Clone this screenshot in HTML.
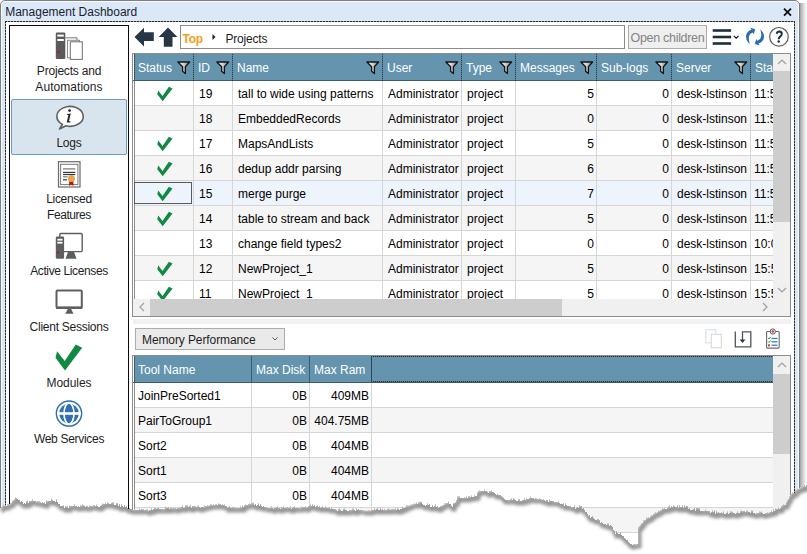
<!DOCTYPE html><html><head><meta charset="utf-8"><style>
*{box-sizing:border-box;margin:0;padding:0}
html,body{width:807px;height:554px;overflow:hidden;background:#fff}
body{position:relative;font-family:"Liberation Sans",sans-serif;font-size:12px;color:#000}
.a{position:absolute}
.t{position:absolute;white-space:nowrap;line-height:14px}
.sl{position:absolute;white-space:nowrap;font-size:12px;line-height:16px;color:#1e1e1e}
</style></head><body>
<svg width="0" height="0" style="position:absolute"><defs><linearGradient id="fg" x1="0" x2="1" y1="0" y2="0"><stop offset="0" stop-color="#f8f8f8"/><stop offset="0.45" stop-color="#d8d8d8"/><stop offset="1" stop-color="#7a7a7a"/></linearGradient></defs></svg>
<div class="a" style="left:798px;top:3px;width:9px;height:551px;background:linear-gradient(to right,#7d7d7d,#a8a8a8 25%,#d8d8d8 60%,#fff)"></div>
<div class="a" style="left:0;top:0;width:800px;height:560px;border:1px solid #7f7f7f;border-radius:5px 5px 0 0;background:#dae8f7;box-shadow:inset 0 0 0 1px #f8fbff"></div>
<div class="t" style="left:5.2px;top:5px;color:#1c1c30">Management Dashboard</div>
<svg class="a" style="left:782px;top:7px" width="11" height="10" viewBox="0 0 11 10"><path d="M2 1.6 L9 8.6 M9 1.6 L2 8.6" stroke="#111" stroke-width="1.8"/></svg>
<div class="a" style="left:5px;top:21px;width:790px;height:540px;background:#fff"></div>
<div class="a" style="left:5px;top:21px;width:790px;height:1px;background:repeating-linear-gradient(to right,#2a2a2a 0 2px,#9c9c9c 2px 3px)"></div>
<div class="a" style="left:5px;top:21px;width:1px;height:540px;background:repeating-linear-gradient(to bottom,#2a2a2a 0 2px,#9c9c9c 2px 3px)"></div>
<div class="a" style="left:794px;top:21px;width:1px;height:540px;background:repeating-linear-gradient(to bottom,#2a2a2a 0 2px,#9c9c9c 2px 3px)"></div>
<div class="a" style="left:9px;top:25px;width:120px;height:540px;border:1px solid #0a0a0a;background:#fff"></div>
<div class="a" style="left:11px;top:99px;width:116px;height:56px;background:#d8e4ee;border:1px solid #6e9cc2;border-radius:2px"></div>
<div class="sl" style="left:-31px;width:200px;text-align:center;top:63px;letter-spacing:-0.2px">Projects and</div>
<div class="sl" style="left:-31px;width:200px;text-align:center;top:79px;letter-spacing:0.05px">Automations</div>
<div class="sl" style="left:-31px;width:200px;text-align:center;top:135px;letter-spacing:-0.2px">Logs</div>
<div class="sl" style="left:-31px;width:200px;text-align:center;top:191px;letter-spacing:-0.3px">Licensed</div>
<div class="sl" style="left:-31px;width:200px;text-align:center;top:207px;letter-spacing:-0.45px">Features</div>
<div class="sl" style="left:-31px;width:200px;text-align:center;top:263px;letter-spacing:-0.38px">Active Licenses</div>
<div class="sl" style="left:-31px;width:200px;text-align:center;top:319px;letter-spacing:-0.26px">Client Sessions</div>
<div class="sl" style="left:-31px;width:200px;text-align:center;top:375px;letter-spacing:-0.05px">Modules</div>
<div class="sl" style="left:-31px;width:200px;text-align:center;top:431px;letter-spacing:-0.3px">Web Services</div>
<svg class="a" style="left:50px;top:28px" width="40" height="34" viewBox="50 28 40 34">
<rect x="55.8" y="32.6" width="9.5" height="26.4" rx="1.2" fill="#5a5a5a"/>
<rect x="57.3" y="34.6" width="6.5" height="2" fill="#fff"/>
<rect x="57.3" y="39" width="6.5" height="2" fill="#fff"/>
<rect x="57.5" y="51" width="2" height="1.6" fill="#c00"/>
<path d="M65.5 37.8 H77 V40" fill="none" stroke="#777" stroke-width="1"/>
<rect x="67.5" y="40.3" width="12" height="17.5" fill="#fff" stroke="#8a8a8a" stroke-width="1"/>
<rect x="70.3" y="41.8" width="12" height="17.6" fill="#fff" stroke="#6f6f6f" stroke-width="1"/>
</svg>
<svg class="a" style="left:50px;top:102px" width="40" height="32" viewBox="50 102 40 32">
<path d="M62.5 124.5 A13.2 9.9 0 1 1 66 125.8 L59.5 129 Z" fill="#fff" stroke="#5f6262" stroke-width="1.6" stroke-linejoin="round"/>
<circle cx="69.6" cy="110.6" r="1.4" fill="#1e2a36"/>
<path d="M67.3 114 L70.8 113.6 L68.9 121.2 L70.6 121.2 L70.2 122.4 L66.7 122.4 L68.4 115 L67 115 Z" fill="#1e2a36"/>
</svg>
<svg class="a" style="left:50px;top:156px" width="40" height="34" viewBox="50 156 40 34">
<rect x="58.5" y="161.7" width="21.5" height="25.3" fill="#fff" stroke="#6a6a6a" stroke-width="1.2"/>
<rect x="60.6" y="164.3" width="17.3" height="20.3" fill="#fff" stroke="#7a7a7a" stroke-width="1"/>
<rect x="63" y="168.3" width="12.3" height="1.2" fill="#777"/>
<rect x="63" y="171.8" width="12.3" height="1.2" fill="#2d3a48"/>
<rect x="63" y="173.9" width="12.3" height="1.2" fill="#2d3a48"/>
<rect x="63" y="176.2" width="4.5" height="1.2" fill="#777"/>
<rect x="63" y="179.2" width="4" height="1.2" fill="#2d3a48"/>
<path d="M69.2 181 L69.2 186 L71.3 184.6 L73.4 186 L73.4 181 Z" fill="#b8140c"/>
<circle cx="71.4" cy="178.5" r="3.5" fill="#e7a44a"/>
</svg>
<svg class="a" style="left:50px;top:228px" width="40" height="34" viewBox="50 228 40 34">
<rect x="59.8" y="233.5" width="22.4" height="18.1" rx="1" fill="#fff" stroke="#5e5e5e" stroke-width="1.4"/>
<path d="M68 252 L74 252 L76.5 258.7 L65.5 258.7 Z" fill="#5e5e5e"/>
<rect x="55.8" y="236.6" width="8.3" height="22.1" rx="1.2" fill="#5e5e5e"/>
<rect x="57.3" y="238.8" width="5.2" height="1.8" fill="#fff"/>
<rect x="57.3" y="241.8" width="5.2" height="1.8" fill="#fff"/>
<rect x="57" y="251.8" width="1.8" height="1.5" fill="#c00"/>
</svg>
<svg class="a" style="left:50px;top:284px" width="40" height="34" viewBox="50 284 40 34">
<rect x="56.5" y="290.5" width="25.3" height="17.3" rx="1" fill="#fff" stroke="#5e5e5e" stroke-width="2"/>
<rect x="56" y="306.5" width="26.3" height="2.4" fill="#5e5e5e"/>
<path d="M68 308.8 L71 308.8 L73.5 313.8 L65.2 313.8 Z" fill="#5e5e5e"/>
</svg>
<svg class="a" style="left:50px;top:340px" width="40" height="34" viewBox="50 340 40 34">
<path d="M57.1 351.3 L64.7 360.9 L75.8 344.6 L82.2 347.7 L65 370.4 L55.5 357.8 Z" fill="#108a43"/>
</svg>
<svg class="a" style="left:50px;top:396px" width="40" height="34" viewBox="50 396 40 34">
<circle cx="69" cy="413.5" r="12.6" fill="none" stroke="#2f6fb0" stroke-width="1.5"/>
<circle cx="69" cy="413.5" r="9.8" fill="#2f6fb0"/>
<rect x="57" y="412.2" width="24" height="2.6" fill="#fff"/>
<ellipse cx="69" cy="413.5" rx="5" ry="10.5" fill="none" stroke="#fff" stroke-width="1.6"/>
</svg>
<svg class="a" style="left:130px;top:22px" width="52" height="30" viewBox="130 22 52 30">
<path d="M134.5 37 L144 27.8 L144 32.3 L153.8 32.3 L153.8 41 L144 41 L144 46.5 Z" fill="#263646"/>
<path d="M168 27.5 L177.4 37 L172.5 37 L172.5 46.8 L163.8 46.8 L163.8 37 L158.7 37 Z" fill="#263646"/>
</svg>
<div class="a" style="left:180px;top:25px;width:445px;height:24px;border:1px solid #8c8c8c;background:#fff"></div>
<div class="t" style="left:182.5px;top:31.5px;color:#f59d16;font-weight:bold;letter-spacing:-0.2px">Top</div>
<svg class="a" style="left:211px;top:33px" width="6" height="8" viewBox="0 0 6 8"><path d="M1.5 1 L4.5 4 L1.5 7 Z" fill="#222"/></svg>
<div class="t" style="left:225.5px;top:31.5px;color:#1e1e1e;letter-spacing:-0.2px">Projects</div>
<div class="a" style="left:628px;top:25px;width:79px;height:24px;border:1px solid #adadad;background:#efefef"></div>
<div class="t" style="left:630.5px;top:31px;color:#838383;font-size:12.5px;letter-spacing:-0.3px">Open children</div>
<svg class="a" style="left:708px;top:24px" width="84" height="26" viewBox="708 24 84 26">
<rect x="712.7" y="29.2" width="18.4" height="2.6" fill="#1f2d3b"/>
<rect x="712.7" y="35.7" width="18.4" height="2.6" fill="#1f2d3b"/>
<rect x="712.7" y="42.2" width="18.4" height="2.6" fill="#1f2d3b"/>
<path d="M733.8 35.8 L736.2 38.2 L738.6 35.8" fill="none" stroke="#111" stroke-width="1.1"/>
<path d="M749.8 44 Q745.2 40 746.2 35 Q747.2 31 751.5 29.8 L750.2 27.8 L755.2 29.3 L753.7 34.3 L752.6 32.4 Q749.5 33.5 748.9 36.5 Q748.3 40 749.8 44 Z" fill="#2a6cb2"/>
<path d="M760.2 29.2 Q764.8 33.2 763.8 38.2 Q762.8 42.2 758.5 43.4 L759.8 45.4 L754.8 43.9 L756.3 38.9 L757.4 40.8 Q760.5 39.7 761.1 36.7 Q761.7 33.2 760.2 29.2 Z" fill="#2a6cb2"/>
<circle cx="778.95" cy="36.8" r="9.3" fill="#fff" stroke="#5a5a5a" stroke-width="1.2"/>
<path d="M776.6 33.8 Q777.2 31.6 779.4 31.6 Q781.9 31.8 781.8 34 Q781.7 35.5 780.1 36.6 Q778.7 37.6 778.7 39.3" fill="none" stroke="#1e2e3a" stroke-width="2"/>
<circle cx="778.7" cy="41.6" r="1.25" fill="#1e2e3a"/>
</svg>
<div class="a" style="left:132px;top:53px;width:659px;height:264px;border:1px solid #8d8d8d;background:#fff;overflow:hidden">
<div class="a" style="left:0;top:0;width:660px;height:27px;background:#6494ae"></div>
<div class="a" style="left:0;top:0;width:1px;height:264px;background:#fff"></div>
<div class="a" style="left:1px;top:0;width:1px;height:27px;background:repeating-linear-gradient(to bottom,#2c3e48 0 1px,#4a6878 1px 2px)"></div>
<div class="a" style="left:1px;top:27px;width:1px;height:245px;background:#8c8c8c"></div>
<div class="a" style="left:0;top:26px;width:660px;height:1px;background:#3e5b6c"></div>
<div class="t" style="left:5px;top:7px;color:#fff">Status</div>
<svg class="a" style="left:44px;top:7px" width="14" height="14" viewBox="0 0 14 14"><path d="M0.9 1 H12.6 L8.4 5.8 V12.6 L5.6 10.3 V5.8 Z" fill="url(#fg)" stroke="#151515" stroke-width="1.3" stroke-linejoin="round"/></svg>
<div class="t" style="left:65px;top:7px;color:#fff">ID</div>
<svg class="a" style="left:83px;top:7px" width="14" height="14" viewBox="0 0 14 14"><path d="M0.9 1 H12.6 L8.4 5.8 V12.6 L5.6 10.3 V5.8 Z" fill="url(#fg)" stroke="#151515" stroke-width="1.3" stroke-linejoin="round"/></svg>
<div class="a" style="left:60px;top:0;width:1px;height:27px;background:repeating-linear-gradient(to bottom,#2c3e48 0 1px,#557a8e 1px 2px)"></div>
<div class="t" style="left:104px;top:7px;color:#fff">Name</div>
<svg class="a" style="left:233px;top:7px" width="14" height="14" viewBox="0 0 14 14"><path d="M0.9 1 H12.6 L8.4 5.8 V12.6 L5.6 10.3 V5.8 Z" fill="url(#fg)" stroke="#151515" stroke-width="1.3" stroke-linejoin="round"/></svg>
<div class="a" style="left:99px;top:0;width:1px;height:27px;background:repeating-linear-gradient(to bottom,#2c3e48 0 1px,#557a8e 1px 2px)"></div>
<div class="t" style="left:254px;top:7px;color:#fff">User</div>
<svg class="a" style="left:312px;top:7px" width="14" height="14" viewBox="0 0 14 14"><path d="M0.9 1 H12.6 L8.4 5.8 V12.6 L5.6 10.3 V5.8 Z" fill="url(#fg)" stroke="#151515" stroke-width="1.3" stroke-linejoin="round"/></svg>
<div class="a" style="left:249px;top:0;width:1px;height:27px;background:repeating-linear-gradient(to bottom,#2c3e48 0 1px,#557a8e 1px 2px)"></div>
<div class="t" style="left:333px;top:7px;color:#fff">Type</div>
<svg class="a" style="left:366px;top:7px" width="14" height="14" viewBox="0 0 14 14"><path d="M0.9 1 H12.6 L8.4 5.8 V12.6 L5.6 10.3 V5.8 Z" fill="url(#fg)" stroke="#151515" stroke-width="1.3" stroke-linejoin="round"/></svg>
<div class="a" style="left:328px;top:0;width:1px;height:27px;background:repeating-linear-gradient(to bottom,#2c3e48 0 1px,#557a8e 1px 2px)"></div>
<div class="t" style="left:387px;top:7px;color:#fff">Messages</div>
<svg class="a" style="left:447px;top:7px" width="14" height="14" viewBox="0 0 14 14"><path d="M0.9 1 H12.6 L8.4 5.8 V12.6 L5.6 10.3 V5.8 Z" fill="url(#fg)" stroke="#151515" stroke-width="1.3" stroke-linejoin="round"/></svg>
<div class="a" style="left:382px;top:0;width:1px;height:27px;background:repeating-linear-gradient(to bottom,#2c3e48 0 1px,#557a8e 1px 2px)"></div>
<div class="t" style="left:468px;top:7px;color:#fff">Sub-logs</div>
<svg class="a" style="left:522px;top:7px" width="14" height="14" viewBox="0 0 14 14"><path d="M0.9 1 H12.6 L8.4 5.8 V12.6 L5.6 10.3 V5.8 Z" fill="url(#fg)" stroke="#151515" stroke-width="1.3" stroke-linejoin="round"/></svg>
<div class="a" style="left:463px;top:0;width:1px;height:27px;background:repeating-linear-gradient(to bottom,#2c3e48 0 1px,#557a8e 1px 2px)"></div>
<div class="t" style="left:543px;top:7px;color:#fff">Server</div>
<svg class="a" style="left:601px;top:7px" width="14" height="14" viewBox="0 0 14 14"><path d="M0.9 1 H12.6 L8.4 5.8 V12.6 L5.6 10.3 V5.8 Z" fill="url(#fg)" stroke="#151515" stroke-width="1.3" stroke-linejoin="round"/></svg>
<div class="a" style="left:538px;top:0;width:1px;height:27px;background:repeating-linear-gradient(to bottom,#2c3e48 0 1px,#557a8e 1px 2px)"></div>
<div class="t" style="left:622px;top:7px;color:#fff">Start</div>
<div class="a" style="left:617px;top:0;width:1px;height:27px;background:repeating-linear-gradient(to bottom,#2c3e48 0 1px,#557a8e 1px 2px)"></div>
<div class="a" style="left:2px;top:27px;width:660px;height:24px;background:#fff"></div>
<div class="a" style="left:2px;top:51px;width:660px;height:1px;background:#d6d6d6"></div>
<div class="a" style="left:60px;top:27px;width:1px;height:25px;background:#d6d6d6"></div>
<div class="a" style="left:99px;top:27px;width:1px;height:25px;background:#d6d6d6"></div>
<div class="a" style="left:249px;top:27px;width:1px;height:25px;background:#d6d6d6"></div>
<div class="a" style="left:328px;top:27px;width:1px;height:25px;background:#d6d6d6"></div>
<div class="a" style="left:382px;top:27px;width:1px;height:25px;background:#d6d6d6"></div>
<div class="a" style="left:463px;top:27px;width:1px;height:25px;background:#d6d6d6"></div>
<div class="a" style="left:538px;top:27px;width:1px;height:25px;background:#d6d6d6"></div>
<div class="a" style="left:617px;top:27px;width:1px;height:25px;background:#d6d6d6"></div>
<svg class="a" style="left:24px;top:32px" width="16" height="16" viewBox="55 344 28 27"><path d="M57.1 351.3 L64.7 360.9 L75.8 344.6 L82.2 347.7 L65 370.4 L55.5 357.8 Z" fill="#108a43"/></svg>
<div class="t" style="left:66px;top:33px">19</div>
<div class="t" style="left:105px;top:33px">tall to wide using patterns</div>
<div class="t" style="left:255px;top:33px">Administrator</div>
<div class="t" style="left:334px;top:33px">project</div>
<div class="t" style="left:383px;width:78px;text-align:right;top:33px">5</div>
<div class="t" style="left:464px;width:72px;text-align:right;top:33px">0</div>
<div class="t" style="left:544px;top:33px">desk-lstinson</div>
<div class="t" style="left:621px;top:33px">11:5</div>
<div class="a" style="left:2px;top:52px;width:660px;height:24px;background:#f5f5f5"></div>
<div class="a" style="left:2px;top:76px;width:660px;height:1px;background:#d6d6d6"></div>
<div class="a" style="left:60px;top:52px;width:1px;height:25px;background:#d6d6d6"></div>
<div class="a" style="left:99px;top:52px;width:1px;height:25px;background:#d6d6d6"></div>
<div class="a" style="left:249px;top:52px;width:1px;height:25px;background:#d6d6d6"></div>
<div class="a" style="left:328px;top:52px;width:1px;height:25px;background:#d6d6d6"></div>
<div class="a" style="left:382px;top:52px;width:1px;height:25px;background:#d6d6d6"></div>
<div class="a" style="left:463px;top:52px;width:1px;height:25px;background:#d6d6d6"></div>
<div class="a" style="left:538px;top:52px;width:1px;height:25px;background:#d6d6d6"></div>
<div class="a" style="left:617px;top:52px;width:1px;height:25px;background:#d6d6d6"></div>
<div class="t" style="left:66px;top:58px">18</div>
<div class="t" style="left:105px;top:58px">EmbeddedRecords</div>
<div class="t" style="left:255px;top:58px">Administrator</div>
<div class="t" style="left:334px;top:58px">project</div>
<div class="t" style="left:383px;width:78px;text-align:right;top:58px">0</div>
<div class="t" style="left:464px;width:72px;text-align:right;top:58px">0</div>
<div class="t" style="left:544px;top:58px">desk-lstinson</div>
<div class="t" style="left:621px;top:58px">11:5</div>
<div class="a" style="left:2px;top:77px;width:660px;height:24px;background:#fff"></div>
<div class="a" style="left:2px;top:101px;width:660px;height:1px;background:#d6d6d6"></div>
<div class="a" style="left:60px;top:77px;width:1px;height:25px;background:#d6d6d6"></div>
<div class="a" style="left:99px;top:77px;width:1px;height:25px;background:#d6d6d6"></div>
<div class="a" style="left:249px;top:77px;width:1px;height:25px;background:#d6d6d6"></div>
<div class="a" style="left:328px;top:77px;width:1px;height:25px;background:#d6d6d6"></div>
<div class="a" style="left:382px;top:77px;width:1px;height:25px;background:#d6d6d6"></div>
<div class="a" style="left:463px;top:77px;width:1px;height:25px;background:#d6d6d6"></div>
<div class="a" style="left:538px;top:77px;width:1px;height:25px;background:#d6d6d6"></div>
<div class="a" style="left:617px;top:77px;width:1px;height:25px;background:#d6d6d6"></div>
<svg class="a" style="left:24px;top:82px" width="16" height="16" viewBox="55 344 28 27"><path d="M57.1 351.3 L64.7 360.9 L75.8 344.6 L82.2 347.7 L65 370.4 L55.5 357.8 Z" fill="#108a43"/></svg>
<div class="t" style="left:66px;top:83px">17</div>
<div class="t" style="left:105px;top:83px">MapsAndLists</div>
<div class="t" style="left:255px;top:83px">Administrator</div>
<div class="t" style="left:334px;top:83px">project</div>
<div class="t" style="left:383px;width:78px;text-align:right;top:83px">5</div>
<div class="t" style="left:464px;width:72px;text-align:right;top:83px">0</div>
<div class="t" style="left:544px;top:83px">desk-lstinson</div>
<div class="t" style="left:621px;top:83px">11:5</div>
<div class="a" style="left:2px;top:102px;width:660px;height:24px;background:#f5f5f5"></div>
<div class="a" style="left:2px;top:126px;width:660px;height:1px;background:#d6d6d6"></div>
<div class="a" style="left:60px;top:102px;width:1px;height:25px;background:#d6d6d6"></div>
<div class="a" style="left:99px;top:102px;width:1px;height:25px;background:#d6d6d6"></div>
<div class="a" style="left:249px;top:102px;width:1px;height:25px;background:#d6d6d6"></div>
<div class="a" style="left:328px;top:102px;width:1px;height:25px;background:#d6d6d6"></div>
<div class="a" style="left:382px;top:102px;width:1px;height:25px;background:#d6d6d6"></div>
<div class="a" style="left:463px;top:102px;width:1px;height:25px;background:#d6d6d6"></div>
<div class="a" style="left:538px;top:102px;width:1px;height:25px;background:#d6d6d6"></div>
<div class="a" style="left:617px;top:102px;width:1px;height:25px;background:#d6d6d6"></div>
<svg class="a" style="left:24px;top:107px" width="16" height="16" viewBox="55 344 28 27"><path d="M57.1 351.3 L64.7 360.9 L75.8 344.6 L82.2 347.7 L65 370.4 L55.5 357.8 Z" fill="#108a43"/></svg>
<div class="t" style="left:66px;top:108px">16</div>
<div class="t" style="left:105px;top:108px">dedup addr parsing</div>
<div class="t" style="left:255px;top:108px">Administrator</div>
<div class="t" style="left:334px;top:108px">project</div>
<div class="t" style="left:383px;width:78px;text-align:right;top:108px">6</div>
<div class="t" style="left:464px;width:72px;text-align:right;top:108px">0</div>
<div class="t" style="left:544px;top:108px">desk-lstinson</div>
<div class="t" style="left:621px;top:108px">11:5</div>
<div class="a" style="left:2px;top:127px;width:660px;height:24px;background:#eef4fb"></div>
<div class="a" style="left:2px;top:151px;width:660px;height:1px;background:#d6d6d6"></div>
<div class="a" style="left:60px;top:127px;width:1px;height:25px;background:#d6d6d6"></div>
<div class="a" style="left:99px;top:127px;width:1px;height:25px;background:#d6d6d6"></div>
<div class="a" style="left:249px;top:127px;width:1px;height:25px;background:#d6d6d6"></div>
<div class="a" style="left:328px;top:127px;width:1px;height:25px;background:#d6d6d6"></div>
<div class="a" style="left:382px;top:127px;width:1px;height:25px;background:#d6d6d6"></div>
<div class="a" style="left:463px;top:127px;width:1px;height:25px;background:#d6d6d6"></div>
<div class="a" style="left:538px;top:127px;width:1px;height:25px;background:#d6d6d6"></div>
<div class="a" style="left:617px;top:127px;width:1px;height:25px;background:#d6d6d6"></div>
<div class="a" style="left:1px;top:128px;width:58px;height:22px;border:1px solid #5a5a5a"></div>
<svg class="a" style="left:24px;top:132px" width="16" height="16" viewBox="55 344 28 27"><path d="M57.1 351.3 L64.7 360.9 L75.8 344.6 L82.2 347.7 L65 370.4 L55.5 357.8 Z" fill="#108a43"/></svg>
<div class="t" style="left:66px;top:133px">15</div>
<div class="t" style="left:105px;top:133px">merge purge</div>
<div class="t" style="left:255px;top:133px">Administrator</div>
<div class="t" style="left:334px;top:133px">project</div>
<div class="t" style="left:383px;width:78px;text-align:right;top:133px">7</div>
<div class="t" style="left:464px;width:72px;text-align:right;top:133px">0</div>
<div class="t" style="left:544px;top:133px">desk-lstinson</div>
<div class="t" style="left:621px;top:133px">11:5</div>
<div class="a" style="left:2px;top:152px;width:660px;height:24px;background:#f5f5f5"></div>
<div class="a" style="left:2px;top:176px;width:660px;height:1px;background:#d6d6d6"></div>
<div class="a" style="left:60px;top:152px;width:1px;height:25px;background:#d6d6d6"></div>
<div class="a" style="left:99px;top:152px;width:1px;height:25px;background:#d6d6d6"></div>
<div class="a" style="left:249px;top:152px;width:1px;height:25px;background:#d6d6d6"></div>
<div class="a" style="left:328px;top:152px;width:1px;height:25px;background:#d6d6d6"></div>
<div class="a" style="left:382px;top:152px;width:1px;height:25px;background:#d6d6d6"></div>
<div class="a" style="left:463px;top:152px;width:1px;height:25px;background:#d6d6d6"></div>
<div class="a" style="left:538px;top:152px;width:1px;height:25px;background:#d6d6d6"></div>
<div class="a" style="left:617px;top:152px;width:1px;height:25px;background:#d6d6d6"></div>
<svg class="a" style="left:24px;top:157px" width="16" height="16" viewBox="55 344 28 27"><path d="M57.1 351.3 L64.7 360.9 L75.8 344.6 L82.2 347.7 L65 370.4 L55.5 357.8 Z" fill="#108a43"/></svg>
<div class="t" style="left:66px;top:158px">14</div>
<div class="t" style="left:105px;top:158px">table to stream and back</div>
<div class="t" style="left:255px;top:158px">Administrator</div>
<div class="t" style="left:334px;top:158px">project</div>
<div class="t" style="left:383px;width:78px;text-align:right;top:158px">5</div>
<div class="t" style="left:464px;width:72px;text-align:right;top:158px">0</div>
<div class="t" style="left:544px;top:158px">desk-lstinson</div>
<div class="t" style="left:621px;top:158px">11:5</div>
<div class="a" style="left:2px;top:177px;width:660px;height:24px;background:#fff"></div>
<div class="a" style="left:2px;top:201px;width:660px;height:1px;background:#d6d6d6"></div>
<div class="a" style="left:60px;top:177px;width:1px;height:25px;background:#d6d6d6"></div>
<div class="a" style="left:99px;top:177px;width:1px;height:25px;background:#d6d6d6"></div>
<div class="a" style="left:249px;top:177px;width:1px;height:25px;background:#d6d6d6"></div>
<div class="a" style="left:328px;top:177px;width:1px;height:25px;background:#d6d6d6"></div>
<div class="a" style="left:382px;top:177px;width:1px;height:25px;background:#d6d6d6"></div>
<div class="a" style="left:463px;top:177px;width:1px;height:25px;background:#d6d6d6"></div>
<div class="a" style="left:538px;top:177px;width:1px;height:25px;background:#d6d6d6"></div>
<div class="a" style="left:617px;top:177px;width:1px;height:25px;background:#d6d6d6"></div>
<div class="t" style="left:66px;top:183px">13</div>
<div class="t" style="left:105px;top:183px">change field types2</div>
<div class="t" style="left:255px;top:183px">Administrator</div>
<div class="t" style="left:334px;top:183px">project</div>
<div class="t" style="left:383px;width:78px;text-align:right;top:183px">0</div>
<div class="t" style="left:464px;width:72px;text-align:right;top:183px">0</div>
<div class="t" style="left:544px;top:183px">desk-lstinson</div>
<div class="t" style="left:621px;top:183px">10:0</div>
<div class="a" style="left:2px;top:202px;width:660px;height:24px;background:#f5f5f5"></div>
<div class="a" style="left:2px;top:226px;width:660px;height:1px;background:#d6d6d6"></div>
<div class="a" style="left:60px;top:202px;width:1px;height:25px;background:#d6d6d6"></div>
<div class="a" style="left:99px;top:202px;width:1px;height:25px;background:#d6d6d6"></div>
<div class="a" style="left:249px;top:202px;width:1px;height:25px;background:#d6d6d6"></div>
<div class="a" style="left:328px;top:202px;width:1px;height:25px;background:#d6d6d6"></div>
<div class="a" style="left:382px;top:202px;width:1px;height:25px;background:#d6d6d6"></div>
<div class="a" style="left:463px;top:202px;width:1px;height:25px;background:#d6d6d6"></div>
<div class="a" style="left:538px;top:202px;width:1px;height:25px;background:#d6d6d6"></div>
<div class="a" style="left:617px;top:202px;width:1px;height:25px;background:#d6d6d6"></div>
<svg class="a" style="left:24px;top:207px" width="16" height="16" viewBox="55 344 28 27"><path d="M57.1 351.3 L64.7 360.9 L75.8 344.6 L82.2 347.7 L65 370.4 L55.5 357.8 Z" fill="#108a43"/></svg>
<div class="t" style="left:66px;top:208px">12</div>
<div class="t" style="left:105px;top:208px">NewProject_1</div>
<div class="t" style="left:255px;top:208px">Administrator</div>
<div class="t" style="left:334px;top:208px">project</div>
<div class="t" style="left:383px;width:78px;text-align:right;top:208px">5</div>
<div class="t" style="left:464px;width:72px;text-align:right;top:208px">0</div>
<div class="t" style="left:544px;top:208px">desk-lstinson</div>
<div class="t" style="left:621px;top:208px">15:5</div>
<div class="a" style="left:2px;top:227px;width:660px;height:24px;background:#fff"></div>
<div class="a" style="left:2px;top:251px;width:660px;height:1px;background:#d6d6d6"></div>
<div class="a" style="left:60px;top:227px;width:1px;height:25px;background:#d6d6d6"></div>
<div class="a" style="left:99px;top:227px;width:1px;height:25px;background:#d6d6d6"></div>
<div class="a" style="left:249px;top:227px;width:1px;height:25px;background:#d6d6d6"></div>
<div class="a" style="left:328px;top:227px;width:1px;height:25px;background:#d6d6d6"></div>
<div class="a" style="left:382px;top:227px;width:1px;height:25px;background:#d6d6d6"></div>
<div class="a" style="left:463px;top:227px;width:1px;height:25px;background:#d6d6d6"></div>
<div class="a" style="left:538px;top:227px;width:1px;height:25px;background:#d6d6d6"></div>
<div class="a" style="left:617px;top:227px;width:1px;height:25px;background:#d6d6d6"></div>
<svg class="a" style="left:24px;top:232px" width="16" height="16" viewBox="55 344 28 27"><path d="M57.1 351.3 L64.7 360.9 L75.8 344.6 L82.2 347.7 L65 370.4 L55.5 357.8 Z" fill="#108a43"/></svg>
<div class="t" style="left:66px;top:233px">11</div>
<div class="t" style="left:105px;top:233px">NewProject_1</div>
<div class="t" style="left:255px;top:233px">Administrator</div>
<div class="t" style="left:334px;top:233px">project</div>
<div class="t" style="left:383px;width:78px;text-align:right;top:233px">5</div>
<div class="t" style="left:464px;width:72px;text-align:right;top:233px">0</div>
<div class="t" style="left:544px;top:233px">desk-lstinson</div>
<div class="t" style="left:621px;top:233px">15:5</div>
<div class="a" style="left:640px;top:0;width:17px;height:246px;background:#f0f0f0"></div>
<div class="a" style="left:640px;top:17px;width:17px;height:151px;background:#cdcdcd"></div>
<svg class="a" style="left:644px;top:4px" width="10" height="8" viewBox="0 0 10 8"><path d="M1 6 L5 2 L9 6" fill="none" stroke="#a0a0a0" stroke-width="1.2"/></svg>
<svg class="a" style="left:644px;top:232px" width="10" height="8" viewBox="0 0 10 8"><path d="M1 2 L5 6 L9 2" fill="none" stroke="#a0a0a0" stroke-width="1.2"/></svg>
<div class="a" style="left:0;top:245px;width:660px;height:17px;background:#f0f0f0"></div>
<div class="a" style="left:17px;top:245px;width:412px;height:17px;background:#cdcdcd"></div>
<svg class="a" style="left:5px;top:248px" width="8" height="10" viewBox="0 0 8 10"><path d="M6 1 L2 5 L6 9" fill="none" stroke="#a0a0a0" stroke-width="1.2"/></svg>
<svg class="a" style="left:628px;top:248px" width="8" height="10" viewBox="0 0 8 10"><path d="M2 1 L6 5 L2 9" fill="none" stroke="#a0a0a0" stroke-width="1.2"/></svg>
</div>
<div class="a" style="left:133px;top:319px;width:658px;height:5px;background:#f1f1f1"></div>
<div class="a" style="left:135px;top:328px;width:150px;height:22px;border:1px solid #acacac;background:#eaeaea"></div>
<div class="t" style="left:142px;top:333px;color:#1e1e1e;letter-spacing:-0.1px">Memory Performance</div>
<svg class="a" style="left:271px;top:336px" width="8" height="6" viewBox="0 0 8 6"><path d="M1.5 1.5 L4 4 L6.5 1.5" fill="none" stroke="#555" stroke-width="1"/></svg>
<svg class="a" style="left:700px;top:325px" width="90" height="28" viewBox="700 325 90 28">
<rect x="705.8" y="329.8" width="10" height="13" fill="#fff" stroke="#d2dde8" stroke-width="1"/>
<rect x="711.3" y="334.3" width="10" height="13.5" fill="#fff" stroke="#d5d5d5" stroke-width="1"/>
<path d="M735.3 331.5 L735.3 346.8 L750.8 346.8 L750.8 331.8 L742.5 331.8 L742.5 340" fill="none" stroke="#4c5660" stroke-width="1.3"/>
<path d="M739.6 339.5 L745.4 339.5 L742.5 343 Z" fill="#2a3440"/>
<rect x="766.6" y="331.5" width="12.6" height="16.6" rx="1" fill="#fff" stroke="#606a74" stroke-width="1.1"/>
<circle cx="772.8" cy="331.5" r="2.6" fill="#fff" stroke="#555" stroke-width="1"/>
<circle cx="772.8" cy="331.5" r="1.3" fill="#d33"/>
<path d="M768 338 l1 1 l1.5-2" fill="none" stroke="#2a2" stroke-width="1"/>
<path d="M768 341.5 l1 1 l1.5-2" fill="none" stroke="#2a2" stroke-width="1"/>
<rect x="768" y="344.3" width="2" height="2" fill="#d33"/>
<rect x="771.5" y="337.8" width="6" height="1.3" fill="#3d7bc0"/>
<rect x="771.5" y="341.2" width="6" height="1.3" fill="#3d7bc0"/>
<rect x="771.5" y="344.6" width="6" height="1.3" fill="#3d7bc0"/>
</svg>
<div class="a" style="left:132px;top:355px;width:659px;height:230px;border:1px solid #8d8d8d;background:#fff;overflow:hidden">
<div class="a" style="left:0;top:0;width:640px;height:27px;background:#6494ae"></div>
<div class="a" style="left:0;top:0;width:1px;height:300px;background:#fff"></div>
<div class="a" style="left:1px;top:0;width:1px;height:27px;background:#3e5b6c"></div>
<div class="a" style="left:1px;top:27px;width:1px;height:300px;background:#8c8c8c"></div>
<div class="a" style="left:0;top:26px;width:640px;height:1px;background:#3e5b6c"></div>
<div class="a" style="left:238px;top:0;width:402px;height:1px;background:repeating-linear-gradient(to right,#2a2f33 0 1px,#6a7a84 1px 2px)"></div>
<div class="a" style="left:238px;top:25px;width:402px;height:1px;background:repeating-linear-gradient(to right,#2a2f33 0 1px,#6a7a84 1px 2px)"></div>
<div class="a" style="left:238px;top:0;width:1px;height:26px;background:#2e4654"></div>
<div class="a" style="left:118px;top:0;width:1px;height:27px;background:#3e5b6c"></div>
<div class="a" style="left:176px;top:0;width:1px;height:27px;background:#3e5b6c"></div>
<div class="t" style="left:5px;top:7px;color:#fff">Tool Name</div>
<div class="t" style="left:123px;top:7px;color:#fff">Max Disk</div>
<div class="t" style="left:181px;top:7px;color:#fff">Max Ram</div>
<div class="a" style="left:2px;top:27px;width:640px;height:24px;background:#fff"></div>
<div class="a" style="left:2px;top:51px;width:640px;height:1px;background:#d6d6d6"></div>
<div class="a" style="left:118px;top:27px;width:1px;height:25px;background:#d6d6d6"></div>
<div class="a" style="left:176px;top:27px;width:1px;height:25px;background:#d6d6d6"></div>
<div class="a" style="left:238px;top:27px;width:1px;height:25px;background:#d6d6d6"></div>
<div class="t" style="left:5px;top:33px">JoinPreSorted1</div>
<div class="t" style="left:118px;width:56px;text-align:right;top:33px">0B</div>
<div class="t" style="left:176px;width:60px;text-align:right;top:33px">409MB</div>
<div class="a" style="left:2px;top:52px;width:640px;height:24px;background:#f5f5f5"></div>
<div class="a" style="left:2px;top:76px;width:640px;height:1px;background:#d6d6d6"></div>
<div class="a" style="left:118px;top:52px;width:1px;height:25px;background:#d6d6d6"></div>
<div class="a" style="left:176px;top:52px;width:1px;height:25px;background:#d6d6d6"></div>
<div class="a" style="left:238px;top:52px;width:1px;height:25px;background:#d6d6d6"></div>
<div class="t" style="left:5px;top:58px">PairToGroup1</div>
<div class="t" style="left:118px;width:56px;text-align:right;top:58px">0B</div>
<div class="t" style="left:176px;width:60px;text-align:right;top:58px">404.75MB</div>
<div class="a" style="left:2px;top:77px;width:640px;height:24px;background:#fff"></div>
<div class="a" style="left:2px;top:101px;width:640px;height:1px;background:#d6d6d6"></div>
<div class="a" style="left:118px;top:77px;width:1px;height:25px;background:#d6d6d6"></div>
<div class="a" style="left:176px;top:77px;width:1px;height:25px;background:#d6d6d6"></div>
<div class="a" style="left:238px;top:77px;width:1px;height:25px;background:#d6d6d6"></div>
<div class="t" style="left:5px;top:83px">Sort2</div>
<div class="t" style="left:118px;width:56px;text-align:right;top:83px">0B</div>
<div class="t" style="left:176px;width:60px;text-align:right;top:83px">404MB</div>
<div class="a" style="left:2px;top:102px;width:640px;height:24px;background:#f5f5f5"></div>
<div class="a" style="left:2px;top:126px;width:640px;height:1px;background:#d6d6d6"></div>
<div class="a" style="left:118px;top:102px;width:1px;height:25px;background:#d6d6d6"></div>
<div class="a" style="left:176px;top:102px;width:1px;height:25px;background:#d6d6d6"></div>
<div class="a" style="left:238px;top:102px;width:1px;height:25px;background:#d6d6d6"></div>
<div class="t" style="left:5px;top:108px">Sort1</div>
<div class="t" style="left:118px;width:56px;text-align:right;top:108px">0B</div>
<div class="t" style="left:176px;width:60px;text-align:right;top:108px">404MB</div>
<div class="a" style="left:2px;top:127px;width:640px;height:24px;background:#fff"></div>
<div class="a" style="left:2px;top:151px;width:640px;height:1px;background:#d6d6d6"></div>
<div class="a" style="left:118px;top:127px;width:1px;height:25px;background:#d6d6d6"></div>
<div class="a" style="left:176px;top:127px;width:1px;height:25px;background:#d6d6d6"></div>
<div class="a" style="left:238px;top:127px;width:1px;height:25px;background:#d6d6d6"></div>
<div class="t" style="left:5px;top:133px">Sort3</div>
<div class="t" style="left:118px;width:56px;text-align:right;top:133px">0B</div>
<div class="t" style="left:176px;width:60px;text-align:right;top:133px">404MB</div>
<div class="a" style="left:2px;top:152px;width:640px;height:24px;background:#f5f5f5"></div>
<div class="a" style="left:2px;top:176px;width:640px;height:1px;background:#d6d6d6"></div>
<div class="a" style="left:118px;top:152px;width:1px;height:25px;background:#d6d6d6"></div>
<div class="a" style="left:176px;top:152px;width:1px;height:25px;background:#d6d6d6"></div>
<div class="a" style="left:238px;top:152px;width:1px;height:25px;background:#d6d6d6"></div>
<div class="t" style="left:5px;top:158px">Sort4</div>
<div class="t" style="left:118px;width:56px;text-align:right;top:158px">0B</div>
<div class="t" style="left:176px;width:60px;text-align:right;top:158px">404MB</div>
<div class="a" style="left:640px;top:0;width:17px;height:300px;background:#f0f0f0"></div>
<div class="a" style="left:640px;top:18px;width:17px;height:80px;background:#cdcdcd"></div>
<svg class="a" style="left:644px;top:5px" width="10" height="8" viewBox="0 0 10 8"><path d="M1 6 L5 2 L9 6" fill="none" stroke="#a0a0a0" stroke-width="1.2"/></svg>
</div>
<svg class="a" style="left:0;top:0" width="807" height="554" viewBox="0 0 807 554">
<defs><filter id="bl" x="-5%" y="-50%" width="110%" height="200%"><feGaussianBlur stdDeviation="1.6"/></filter>
<clipPath id="below"><polygon points="0,508 1,508 1,507 2,507 2,506 3,506 3,504 4,504 4,506 5,506 5,505 6,505 6,506 7,506 7,504 8,504 8,504 9,504 9,504 10,504 10,503 11,503 11,503 12,503 12,501 13,501 13,500 14,500 14,499 15,499 15,497 16,497 16,498 17,498 17,499 18,499 18,500 19,500 19,500 20,500 20,502 21,502 21,501 22,501 22,502 23,502 23,504 24,504 24,503 25,503 25,504 26,504 26,501 27,501 27,500 28,500 28,503 29,503 29,501 30,501 30,501 31,501 31,501 32,501 32,499 33,499 33,501 34,501 34,501 35,501 35,501 36,501 36,502 37,502 37,501 38,501 38,501 39,501 39,501 40,501 40,502 41,502 41,503 42,503 42,502 43,502 43,503 44,503 44,502 45,502 45,504 46,504 46,500 47,500 47,501 48,501 48,501 49,501 49,501 50,501 50,501 51,501 51,498 52,498 52,500 53,500 53,501 54,501 54,501 55,501 55,502 56,502 56,499 57,499 57,502 58,502 58,504 59,504 59,504 60,504 60,506 61,506 61,506 62,506 62,506 63,506 63,505 64,505 64,508 65,508 65,506 66,506 66,507 67,507 67,506 68,506 68,508 69,508 69,505 70,505 70,506 71,506 71,506 72,506 72,506 73,506 73,506 74,506 74,504 75,504 75,506 76,506 76,506 77,506 77,507 78,507 78,506 79,506 79,507 80,507 80,505 81,505 81,506 82,506 82,504 83,504 83,505 84,505 84,506 85,506 85,507 86,507 86,506 87,506 87,506 88,506 88,507 89,507 89,505 90,505 90,506 91,506 91,506 92,506 92,506 93,506 93,505 94,505 94,505 95,505 95,506 96,506 96,504 97,504 97,506 98,506 98,507 99,507 99,507 100,507 100,506 101,506 101,505 102,505 102,503 103,503 103,504 104,504 104,504 105,504 105,502 106,502 106,504 107,504 107,502 108,502 108,503 109,503 109,504 110,504 110,504 111,504 111,503 112,503 112,502 113,502 113,502 114,502 114,505 115,505 115,505 116,505 116,503 117,503 117,503 118,503 118,506 119,506 119,504 120,504 120,507 121,507 121,504 122,504 122,506 123,506 123,507 124,507 124,505 125,505 125,507 126,507 126,506 127,506 127,508 128,508 128,509 129,509 129,508 130,508 130,509 131,509 131,509 132,509 132,510 133,510 133,510 134,510 134,509 135,509 135,510 136,510 136,510 137,510 137,510 138,510 138,510 139,510 139,508 140,508 140,510 141,510 141,509 142,509 142,509 143,509 143,509 144,509 144,510 145,510 145,510 146,510 146,509 147,509 147,509 148,509 148,511 149,511 149,510 150,510 150,510 151,510 151,508 152,508 152,510 153,510 153,509 154,509 154,507 155,507 155,508 156,508 156,509 157,509 157,507 158,507 158,508 159,508 159,509 160,509 160,509 161,509 161,509 162,509 162,509 163,509 163,509 164,509 164,509 165,509 165,506 166,506 166,508 167,508 167,508 168,508 168,507 169,507 169,509 170,509 170,508 171,508 171,508 172,508 172,508 173,508 173,508 174,508 174,508 175,508 175,507 176,507 176,509 177,509 177,507 178,507 178,508 179,508 179,508 180,508 180,507 181,507 181,507 182,507 182,505 183,505 183,508 184,508 184,508 185,508 185,505 186,505 186,505 187,505 187,505 188,505 188,507 189,507 189,506 190,506 190,505 191,505 191,508 192,508 192,506 193,506 193,506 194,506 194,506 195,506 195,506 196,506 196,507 197,507 197,506 198,506 198,505 199,505 199,507 200,507 200,508 201,508 201,507 202,507 202,507 203,507 203,507 204,507 204,505 205,505 205,506 206,506 206,506 207,506 207,505 208,505 208,506 209,506 209,505 210,505 210,504 211,504 211,504 212,504 212,505 213,505 213,504 214,504 214,505 215,505 215,504 216,504 216,504 217,504 217,505 218,505 218,503 219,503 219,504 220,504 220,504 221,504 221,505 222,505 222,504 223,504 223,505 224,505 224,504 225,504 225,506 226,506 226,506 227,506 227,508 228,508 228,507 229,507 229,506 230,506 230,508 231,508 231,508 232,508 232,507 233,507 233,507 234,507 234,507 235,507 235,507 236,507 236,508 237,508 237,508 238,508 238,508 239,508 239,508 240,508 240,506 241,506 241,508 242,508 242,505 243,505 243,507 244,507 244,505 245,505 245,504 246,504 246,505 247,505 247,505 248,505 248,504 249,504 249,503 250,503 250,504 251,504 251,503 252,503 252,503 253,503 253,502 254,502 254,505 255,505 255,504 256,504 256,506 257,506 257,505 258,505 258,503 259,503 259,506 260,506 260,504 261,504 261,506 262,506 262,507 263,507 263,506 264,506 264,507 265,507 265,507 266,507 266,507 267,507 267,508 268,508 268,508 269,508 269,508 270,508 270,508 271,508 271,506 272,506 272,508 273,508 273,509 274,509 274,508 275,508 275,508 276,508 276,507 277,507 277,506 278,506 278,508 279,508 279,508 280,508 280,509 281,509 281,507 282,507 282,508 283,508 283,506 284,506 284,508 285,508 285,508 286,508 286,508 287,508 287,507 288,507 288,508 289,508 289,508 290,508 290,506 291,506 291,509 292,509 292,508 293,508 293,507 294,507 294,506 295,506 295,508 296,508 296,508 297,508 297,508 298,508 298,508 299,508 299,508 300,508 300,508 301,508 301,506 302,506 302,507 303,507 303,507 304,507 304,507 305,507 305,506 306,506 306,508 307,508 307,507 308,507 308,506 309,506 309,505 310,505 310,504 311,504 311,506 312,506 312,504 313,504 313,506 314,506 314,505 315,505 315,507 316,507 316,506 317,506 317,505 318,505 318,507 319,507 319,506 320,506 320,508 321,508 321,507 322,507 322,506 323,506 323,508 324,508 324,508 325,508 325,506 326,506 326,508 327,508 327,508 328,508 328,508 329,508 329,507 330,507 330,509 331,509 331,507 332,507 332,509 333,509 333,509 334,509 334,509 335,509 335,509 336,509 336,510 337,510 337,511 338,511 338,509 339,509 339,508 340,508 340,510 341,510 341,511 342,511 342,511 343,511 343,509 344,509 344,508 345,508 345,510 346,510 346,510 347,510 347,511 348,511 348,511 349,511 349,510 350,510 350,510 351,510 351,510 352,510 352,508 353,508 353,508 354,508 354,510 355,510 355,511 356,511 356,508 357,508 357,510 358,510 358,509 359,509 359,510 360,510 360,510 361,510 361,510 362,510 362,510 363,510 363,510 364,510 364,510 365,510 365,511 366,511 366,510 367,510 367,511 368,511 368,510 369,510 369,510 370,510 370,511 371,511 371,509 372,509 372,510 373,510 373,510 374,510 374,508 375,508 375,510 376,510 376,509 377,509 377,507 378,507 378,510 379,510 379,510 380,510 380,508 381,508 381,510 382,510 382,509 383,509 383,510 384,510 384,509 385,509 385,510 386,510 386,510 387,510 387,509 388,509 388,508 389,508 389,509 390,509 390,510 391,510 391,509 392,509 392,509 393,509 393,509 394,509 394,509 395,509 395,508 396,508 396,510 397,510 397,507 398,507 398,509 399,509 399,510 400,510 400,509 401,509 401,509 402,509 402,506 403,506 403,508 404,508 404,508 405,508 405,507 406,507 406,505 407,505 407,505 408,505 408,506 409,506 409,505 410,505 410,505 411,505 411,504 412,504 412,504 413,504 413,504 414,504 414,503 415,503 415,504 416,504 416,502 417,502 417,504 418,504 418,502 419,502 419,502 420,502 420,501 421,501 421,502 422,502 422,504 423,504 423,505 424,505 424,505 425,505 425,506 426,506 426,505 427,505 427,503 428,503 428,505 429,505 429,504 430,504 430,507 431,507 431,507 432,507 432,505 433,505 433,507 434,507 434,506 435,506 435,504 436,504 436,507 437,507 437,506 438,506 438,508 439,508 439,507 440,507 440,506 441,506 441,506 442,506 442,505 443,505 443,505 444,505 444,503 445,503 445,503 446,503 446,503 447,503 447,503 448,503 448,501 449,501 449,504 450,504 450,504 451,504 451,506 452,506 452,507 453,507 453,503 454,503 454,503 455,503 455,502 456,502 456,500 457,500 457,496 458,496 458,496 459,496 459,496 460,496 460,498 461,498 461,498 462,498 462,498 463,498 463,498 464,498 464,497 465,497 465,498 466,498 466,496 467,496 467,498 468,498 468,496 469,496 469,496 470,496 470,497 471,497 471,495 472,495 472,497 473,497 473,497 474,497 474,495 475,495 475,496 476,496 476,496 477,496 477,492 478,492 478,491 479,491 479,490 480,490 480,491 481,491 481,491 482,491 482,491 483,491 483,491 484,491 484,489 485,489 485,491 486,491 486,491 487,491 487,492 488,492 488,493 489,493 489,491 490,491 490,491 491,491 491,490 492,490 492,492 493,492 493,492 494,492 494,493 495,493 495,494 496,494 496,495 497,495 497,494 498,494 498,495 499,495 499,495 500,495 500,495 501,495 501,496 502,496 502,497 503,497 503,498 504,498 504,499 505,499 505,500 506,500 506,500 507,500 507,500 508,500 508,500 509,500 509,500 510,500 510,499 511,499 511,498 512,498 512,500 513,500 513,498 514,498 514,499 515,499 515,500 516,500 516,501 517,501 517,501 518,501 518,499 519,499 519,499 520,499 520,501 521,501 521,501 522,501 522,500 523,500 523,500 524,500 524,498 525,498 525,500 526,500 526,498 527,498 527,499 528,499 528,499 529,499 529,498 530,498 530,496 531,496 531,498 532,498 532,498 533,498 533,498 534,498 534,499 535,499 535,498 536,498 536,498 537,498 537,499 538,499 538,499 539,499 539,498 540,498 540,499 541,499 541,499 542,499 542,500 543,500 543,499 544,499 544,500 545,500 545,501 546,501 546,500 547,500 547,500 548,500 548,502 549,502 549,499 550,499 550,501 551,501 551,501 552,501 552,501 553,501 553,501 554,501 554,502 555,502 555,502 556,502 556,502 557,502 557,502 558,502 558,501 559,501 559,503 560,503 560,504 561,504 561,504 562,504 562,504 563,504 563,503 564,503 564,506 565,506 565,503 566,503 566,505 567,505 567,506 568,506 568,506 569,506 569,506 570,506 570,506 571,506 571,507 572,507 572,507 573,507 573,507 574,507 574,505 575,505 575,509 576,509 576,508 577,508 577,507 578,507 578,508 579,508 579,505 580,505 580,506 581,506 581,506 582,506 582,509 583,509 583,508 584,508 584,510 585,510 585,512 586,512 586,512 587,512 587,514 588,514 588,516 589,516 589,515 590,515 590,518 591,518 591,517 592,517 592,516 593,516 593,518 594,518 594,519 595,519 595,520 596,520 596,520 597,520 597,519 598,519 598,519 599,519 599,520 600,520 600,523 601,523 601,522 602,522 602,523 603,523 603,524 604,524 604,524 605,524 605,524 606,524 606,525 607,525 607,523 608,523 608,523 609,523 609,526 610,526 610,525 611,525 611,526 612,526 612,527 613,527 613,527 613,527 613,530 614,530 614,531 615,531 615,534 616,534 616,531 617,531 617,533 618,533 618,534 619,534 619,534 620,534 620,532 621,532 621,535 622,535 622,536 623,536 623,536 624,536 624,538 625,538 625,539 626,539 626,540 627,540 627,540 628,540 628,542 629,542 629,543 630,543 630,544 631,544 631,544 632,544 632,545 633,545 633,544 634,544 634,544 635,544 635,544 636,544 636,544 637,544 637,544 638,544 638,544 638,544 638,527 639,527 639,526 640,526 640,525 641,525 641,523 642,523 642,523 643,523 643,520 644,520 644,520 645,520 645,520 646,520 646,517 647,517 647,518 648,518 648,517 649,517 649,518 650,518 650,516 651,516 651,515 652,515 652,515 653,515 653,514 654,514 654,513 655,513 655,512 656,512 656,513 657,513 657,512 658,512 658,510 659,510 659,511 660,511 660,510 661,510 661,510 662,510 662,507 663,507 663,509 664,509 664,508 665,508 665,509 666,509 666,509 667,509 667,508 668,508 668,506 669,506 669,505 670,505 670,508 671,508 671,506 672,506 672,507 673,507 673,505 674,505 674,506 675,506 675,507 676,507 676,507 677,507 677,505 678,505 678,508 679,508 679,505 680,505 680,507 681,507 681,507 682,507 682,505 683,505 683,508 684,508 684,505 685,505 685,507 686,507 686,506 687,506 687,506 688,506 688,509 689,509 689,508 690,508 690,510 691,510 691,510 692,510 692,510 693,510 693,509 694,509 694,507 695,507 695,511 696,511 696,508 697,508 697,508 698,508 698,508 699,508 699,508 700,508 700,511 701,511 701,511 702,511 702,511 703,511 703,511 704,511 704,511 705,511 705,509 706,509 706,511 707,511 707,511 708,511 708,511 709,511 709,511 710,511 710,513 711,513 711,512 712,512 712,510 713,510 713,512 714,512 714,510 715,510 715,514 716,514 716,511 717,511 717,513 718,513 718,512 719,512 719,513 720,513 720,513 721,513 721,512 722,512 722,513 723,513 723,511 724,511 724,514 725,514 725,514 726,514 726,513 727,513 727,511 728,511 728,514 729,514 729,513 730,513 730,511 731,511 731,511 732,511 732,512 733,512 733,513 734,513 734,513 735,513 735,514 736,514 736,513 737,513 737,511 738,511 738,513 739,513 739,513 740,513 740,511 741,511 741,510 742,510 742,511 743,511 743,511 744,511 744,511 745,511 745,512 746,512 746,511 747,511 747,510 748,510 748,512 749,512 749,512 750,512 750,513 751,513 751,510 752,510 752,510 753,510 753,513 754,513 754,513 755,513 755,514 756,514 756,513 757,513 757,513 758,513 758,513 759,513 759,511 760,511 760,512 761,512 761,511 762,511 762,513 763,513 763,514 764,514 764,514 765,514 765,513 766,513 766,513 767,513 767,512 768,512 768,513 769,513 769,512 770,512 770,512 771,512 771,510 772,510 772,512 773,512 773,509 774,509 774,511 775,511 775,508 776,508 776,509 777,509 777,509 778,509 778,507 779,507 779,509 780,509 780,508 781,508 781,506 782,506 782,505 783,505 783,504 784,504 784,505 785,505 785,505 786,505 786,502 787,502 787,500 788,500 788,499 789,499 789,496 790,496 790,495 791,495 791,494 792,494 792,492 793,492 793,493 794,493 794,493 795,493 795,490 796,490 796,490 797,490 797,488 798,488 798,489 799,489 799,488 800,488 800,487 801,487 801,488 802,488 802,487 803,487 803,486 804,486 804,484 805,484 805,487 806,487 806,485 807,485 807,485 807,554 0,554"/></clipPath></defs>
<polygon points="0,508 1,508 1,507 2,507 2,506 3,506 3,504 4,504 4,506 5,506 5,505 6,505 6,506 7,506 7,504 8,504 8,504 9,504 9,504 10,504 10,503 11,503 11,503 12,503 12,501 13,501 13,500 14,500 14,499 15,499 15,497 16,497 16,498 17,498 17,499 18,499 18,500 19,500 19,500 20,500 20,502 21,502 21,501 22,501 22,502 23,502 23,504 24,504 24,503 25,503 25,504 26,504 26,501 27,501 27,500 28,500 28,503 29,503 29,501 30,501 30,501 31,501 31,501 32,501 32,499 33,499 33,501 34,501 34,501 35,501 35,501 36,501 36,502 37,502 37,501 38,501 38,501 39,501 39,501 40,501 40,502 41,502 41,503 42,503 42,502 43,502 43,503 44,503 44,502 45,502 45,504 46,504 46,500 47,500 47,501 48,501 48,501 49,501 49,501 50,501 50,501 51,501 51,498 52,498 52,500 53,500 53,501 54,501 54,501 55,501 55,502 56,502 56,499 57,499 57,502 58,502 58,504 59,504 59,504 60,504 60,506 61,506 61,506 62,506 62,506 63,506 63,505 64,505 64,508 65,508 65,506 66,506 66,507 67,507 67,506 68,506 68,508 69,508 69,505 70,505 70,506 71,506 71,506 72,506 72,506 73,506 73,506 74,506 74,504 75,504 75,506 76,506 76,506 77,506 77,507 78,507 78,506 79,506 79,507 80,507 80,505 81,505 81,506 82,506 82,504 83,504 83,505 84,505 84,506 85,506 85,507 86,507 86,506 87,506 87,506 88,506 88,507 89,507 89,505 90,505 90,506 91,506 91,506 92,506 92,506 93,506 93,505 94,505 94,505 95,505 95,506 96,506 96,504 97,504 97,506 98,506 98,507 99,507 99,507 100,507 100,506 101,506 101,505 102,505 102,503 103,503 103,504 104,504 104,504 105,504 105,502 106,502 106,504 107,504 107,502 108,502 108,503 109,503 109,504 110,504 110,504 111,504 111,503 112,503 112,502 113,502 113,502 114,502 114,505 115,505 115,505 116,505 116,503 117,503 117,503 118,503 118,506 119,506 119,504 120,504 120,507 121,507 121,504 122,504 122,506 123,506 123,507 124,507 124,505 125,505 125,507 126,507 126,506 127,506 127,508 128,508 128,509 129,509 129,508 130,508 130,509 131,509 131,509 132,509 132,510 133,510 133,510 134,510 134,509 135,509 135,510 136,510 136,510 137,510 137,510 138,510 138,510 139,510 139,508 140,508 140,510 141,510 141,509 142,509 142,509 143,509 143,509 144,509 144,510 145,510 145,510 146,510 146,509 147,509 147,509 148,509 148,511 149,511 149,510 150,510 150,510 151,510 151,508 152,508 152,510 153,510 153,509 154,509 154,507 155,507 155,508 156,508 156,509 157,509 157,507 158,507 158,508 159,508 159,509 160,509 160,509 161,509 161,509 162,509 162,509 163,509 163,509 164,509 164,509 165,509 165,506 166,506 166,508 167,508 167,508 168,508 168,507 169,507 169,509 170,509 170,508 171,508 171,508 172,508 172,508 173,508 173,508 174,508 174,508 175,508 175,507 176,507 176,509 177,509 177,507 178,507 178,508 179,508 179,508 180,508 180,507 181,507 181,507 182,507 182,505 183,505 183,508 184,508 184,508 185,508 185,505 186,505 186,505 187,505 187,505 188,505 188,507 189,507 189,506 190,506 190,505 191,505 191,508 192,508 192,506 193,506 193,506 194,506 194,506 195,506 195,506 196,506 196,507 197,507 197,506 198,506 198,505 199,505 199,507 200,507 200,508 201,508 201,507 202,507 202,507 203,507 203,507 204,507 204,505 205,505 205,506 206,506 206,506 207,506 207,505 208,505 208,506 209,506 209,505 210,505 210,504 211,504 211,504 212,504 212,505 213,505 213,504 214,504 214,505 215,505 215,504 216,504 216,504 217,504 217,505 218,505 218,503 219,503 219,504 220,504 220,504 221,504 221,505 222,505 222,504 223,504 223,505 224,505 224,504 225,504 225,506 226,506 226,506 227,506 227,508 228,508 228,507 229,507 229,506 230,506 230,508 231,508 231,508 232,508 232,507 233,507 233,507 234,507 234,507 235,507 235,507 236,507 236,508 237,508 237,508 238,508 238,508 239,508 239,508 240,508 240,506 241,506 241,508 242,508 242,505 243,505 243,507 244,507 244,505 245,505 245,504 246,504 246,505 247,505 247,505 248,505 248,504 249,504 249,503 250,503 250,504 251,504 251,503 252,503 252,503 253,503 253,502 254,502 254,505 255,505 255,504 256,504 256,506 257,506 257,505 258,505 258,503 259,503 259,506 260,506 260,504 261,504 261,506 262,506 262,507 263,507 263,506 264,506 264,507 265,507 265,507 266,507 266,507 267,507 267,508 268,508 268,508 269,508 269,508 270,508 270,508 271,508 271,506 272,506 272,508 273,508 273,509 274,509 274,508 275,508 275,508 276,508 276,507 277,507 277,506 278,506 278,508 279,508 279,508 280,508 280,509 281,509 281,507 282,507 282,508 283,508 283,506 284,506 284,508 285,508 285,508 286,508 286,508 287,508 287,507 288,507 288,508 289,508 289,508 290,508 290,506 291,506 291,509 292,509 292,508 293,508 293,507 294,507 294,506 295,506 295,508 296,508 296,508 297,508 297,508 298,508 298,508 299,508 299,508 300,508 300,508 301,508 301,506 302,506 302,507 303,507 303,507 304,507 304,507 305,507 305,506 306,506 306,508 307,508 307,507 308,507 308,506 309,506 309,505 310,505 310,504 311,504 311,506 312,506 312,504 313,504 313,506 314,506 314,505 315,505 315,507 316,507 316,506 317,506 317,505 318,505 318,507 319,507 319,506 320,506 320,508 321,508 321,507 322,507 322,506 323,506 323,508 324,508 324,508 325,508 325,506 326,506 326,508 327,508 327,508 328,508 328,508 329,508 329,507 330,507 330,509 331,509 331,507 332,507 332,509 333,509 333,509 334,509 334,509 335,509 335,509 336,509 336,510 337,510 337,511 338,511 338,509 339,509 339,508 340,508 340,510 341,510 341,511 342,511 342,511 343,511 343,509 344,509 344,508 345,508 345,510 346,510 346,510 347,510 347,511 348,511 348,511 349,511 349,510 350,510 350,510 351,510 351,510 352,510 352,508 353,508 353,508 354,508 354,510 355,510 355,511 356,511 356,508 357,508 357,510 358,510 358,509 359,509 359,510 360,510 360,510 361,510 361,510 362,510 362,510 363,510 363,510 364,510 364,510 365,510 365,511 366,511 366,510 367,510 367,511 368,511 368,510 369,510 369,510 370,510 370,511 371,511 371,509 372,509 372,510 373,510 373,510 374,510 374,508 375,508 375,510 376,510 376,509 377,509 377,507 378,507 378,510 379,510 379,510 380,510 380,508 381,508 381,510 382,510 382,509 383,509 383,510 384,510 384,509 385,509 385,510 386,510 386,510 387,510 387,509 388,509 388,508 389,508 389,509 390,509 390,510 391,510 391,509 392,509 392,509 393,509 393,509 394,509 394,509 395,509 395,508 396,508 396,510 397,510 397,507 398,507 398,509 399,509 399,510 400,510 400,509 401,509 401,509 402,509 402,506 403,506 403,508 404,508 404,508 405,508 405,507 406,507 406,505 407,505 407,505 408,505 408,506 409,506 409,505 410,505 410,505 411,505 411,504 412,504 412,504 413,504 413,504 414,504 414,503 415,503 415,504 416,504 416,502 417,502 417,504 418,504 418,502 419,502 419,502 420,502 420,501 421,501 421,502 422,502 422,504 423,504 423,505 424,505 424,505 425,505 425,506 426,506 426,505 427,505 427,503 428,503 428,505 429,505 429,504 430,504 430,507 431,507 431,507 432,507 432,505 433,505 433,507 434,507 434,506 435,506 435,504 436,504 436,507 437,507 437,506 438,506 438,508 439,508 439,507 440,507 440,506 441,506 441,506 442,506 442,505 443,505 443,505 444,505 444,503 445,503 445,503 446,503 446,503 447,503 447,503 448,503 448,501 449,501 449,504 450,504 450,504 451,504 451,506 452,506 452,507 453,507 453,503 454,503 454,503 455,503 455,502 456,502 456,500 457,500 457,496 458,496 458,496 459,496 459,496 460,496 460,498 461,498 461,498 462,498 462,498 463,498 463,498 464,498 464,497 465,497 465,498 466,498 466,496 467,496 467,498 468,498 468,496 469,496 469,496 470,496 470,497 471,497 471,495 472,495 472,497 473,497 473,497 474,497 474,495 475,495 475,496 476,496 476,496 477,496 477,492 478,492 478,491 479,491 479,490 480,490 480,491 481,491 481,491 482,491 482,491 483,491 483,491 484,491 484,489 485,489 485,491 486,491 486,491 487,491 487,492 488,492 488,493 489,493 489,491 490,491 490,491 491,491 491,490 492,490 492,492 493,492 493,492 494,492 494,493 495,493 495,494 496,494 496,495 497,495 497,494 498,494 498,495 499,495 499,495 500,495 500,495 501,495 501,496 502,496 502,497 503,497 503,498 504,498 504,499 505,499 505,500 506,500 506,500 507,500 507,500 508,500 508,500 509,500 509,500 510,500 510,499 511,499 511,498 512,498 512,500 513,500 513,498 514,498 514,499 515,499 515,500 516,500 516,501 517,501 517,501 518,501 518,499 519,499 519,499 520,499 520,501 521,501 521,501 522,501 522,500 523,500 523,500 524,500 524,498 525,498 525,500 526,500 526,498 527,498 527,499 528,499 528,499 529,499 529,498 530,498 530,496 531,496 531,498 532,498 532,498 533,498 533,498 534,498 534,499 535,499 535,498 536,498 536,498 537,498 537,499 538,499 538,499 539,499 539,498 540,498 540,499 541,499 541,499 542,499 542,500 543,500 543,499 544,499 544,500 545,500 545,501 546,501 546,500 547,500 547,500 548,500 548,502 549,502 549,499 550,499 550,501 551,501 551,501 552,501 552,501 553,501 553,501 554,501 554,502 555,502 555,502 556,502 556,502 557,502 557,502 558,502 558,501 559,501 559,503 560,503 560,504 561,504 561,504 562,504 562,504 563,504 563,503 564,503 564,506 565,506 565,503 566,503 566,505 567,505 567,506 568,506 568,506 569,506 569,506 570,506 570,506 571,506 571,507 572,507 572,507 573,507 573,507 574,507 574,505 575,505 575,509 576,509 576,508 577,508 577,507 578,507 578,508 579,508 579,505 580,505 580,506 581,506 581,506 582,506 582,509 583,509 583,508 584,508 584,510 585,510 585,512 586,512 586,512 587,512 587,514 588,514 588,516 589,516 589,515 590,515 590,518 591,518 591,517 592,517 592,516 593,516 593,518 594,518 594,519 595,519 595,520 596,520 596,520 597,520 597,519 598,519 598,519 599,519 599,520 600,520 600,523 601,523 601,522 602,522 602,523 603,523 603,524 604,524 604,524 605,524 605,524 606,524 606,525 607,525 607,523 608,523 608,523 609,523 609,526 610,526 610,525 611,525 611,526 612,526 612,527 613,527 613,527 613,527 613,530 614,530 614,531 615,531 615,534 616,534 616,531 617,531 617,533 618,533 618,534 619,534 619,534 620,534 620,532 621,532 621,535 622,535 622,536 623,536 623,536 624,536 624,538 625,538 625,539 626,539 626,540 627,540 627,540 628,540 628,542 629,542 629,543 630,543 630,544 631,544 631,544 632,544 632,545 633,545 633,544 634,544 634,544 635,544 635,544 636,544 636,544 637,544 637,544 638,544 638,544 638,544 638,527 639,527 639,526 640,526 640,525 641,525 641,523 642,523 642,523 643,523 643,520 644,520 644,520 645,520 645,520 646,520 646,517 647,517 647,518 648,518 648,517 649,517 649,518 650,518 650,516 651,516 651,515 652,515 652,515 653,515 653,514 654,514 654,513 655,513 655,512 656,512 656,513 657,513 657,512 658,512 658,510 659,510 659,511 660,511 660,510 661,510 661,510 662,510 662,507 663,507 663,509 664,509 664,508 665,508 665,509 666,509 666,509 667,509 667,508 668,508 668,506 669,506 669,505 670,505 670,508 671,508 671,506 672,506 672,507 673,507 673,505 674,505 674,506 675,506 675,507 676,507 676,507 677,507 677,505 678,505 678,508 679,508 679,505 680,505 680,507 681,507 681,507 682,507 682,505 683,505 683,508 684,508 684,505 685,505 685,507 686,507 686,506 687,506 687,506 688,506 688,509 689,509 689,508 690,508 690,510 691,510 691,510 692,510 692,510 693,510 693,509 694,509 694,507 695,507 695,511 696,511 696,508 697,508 697,508 698,508 698,508 699,508 699,508 700,508 700,511 701,511 701,511 702,511 702,511 703,511 703,511 704,511 704,511 705,511 705,509 706,509 706,511 707,511 707,511 708,511 708,511 709,511 709,511 710,511 710,513 711,513 711,512 712,512 712,510 713,510 713,512 714,512 714,510 715,510 715,514 716,514 716,511 717,511 717,513 718,513 718,512 719,512 719,513 720,513 720,513 721,513 721,512 722,512 722,513 723,513 723,511 724,511 724,514 725,514 725,514 726,514 726,513 727,513 727,511 728,511 728,514 729,514 729,513 730,513 730,511 731,511 731,511 732,511 732,512 733,512 733,513 734,513 734,513 735,513 735,514 736,514 736,513 737,513 737,511 738,511 738,513 739,513 739,513 740,513 740,511 741,511 741,510 742,510 742,511 743,511 743,511 744,511 744,511 745,511 745,512 746,512 746,511 747,511 747,510 748,510 748,512 749,512 749,512 750,512 750,513 751,513 751,510 752,510 752,510 753,510 753,513 754,513 754,513 755,513 755,514 756,514 756,513 757,513 757,513 758,513 758,513 759,513 759,511 760,511 760,512 761,512 761,511 762,511 762,513 763,513 763,514 764,514 764,514 765,514 765,513 766,513 766,513 767,513 767,512 768,512 768,513 769,513 769,512 770,512 770,512 771,512 771,510 772,510 772,512 773,512 773,509 774,509 774,511 775,511 775,508 776,508 776,509 777,509 777,509 778,509 778,507 779,507 779,509 780,509 780,508 781,508 781,506 782,506 782,505 783,505 783,504 784,504 784,505 785,505 785,505 786,505 786,502 787,502 787,500 788,500 788,499 789,499 789,496 790,496 790,495 791,495 791,494 792,494 792,492 793,492 793,493 794,493 794,493 795,493 795,490 796,490 796,490 797,490 797,488 798,488 798,489 799,489 799,488 800,488 800,487 801,487 801,488 802,488 802,487 803,487 803,486 804,486 804,484 805,484 805,487 806,487 806,485 807,485 807,485 807,554 0,554" fill="#fff"/>
<g clip-path="url(#below)"><polyline points="0,508 1,508 1,507 2,507 2,506 3,506 3,504 4,504 4,506 5,506 5,505 6,505 6,506 7,506 7,504 8,504 8,504 9,504 9,504 10,504 10,503 11,503 11,503 12,503 12,501 13,501 13,500 14,500 14,499 15,499 15,497 16,497 16,498 17,498 17,499 18,499 18,500 19,500 19,500 20,500 20,502 21,502 21,501 22,501 22,502 23,502 23,504 24,504 24,503 25,503 25,504 26,504 26,501 27,501 27,500 28,500 28,503 29,503 29,501 30,501 30,501 31,501 31,501 32,501 32,499 33,499 33,501 34,501 34,501 35,501 35,501 36,501 36,502 37,502 37,501 38,501 38,501 39,501 39,501 40,501 40,502 41,502 41,503 42,503 42,502 43,502 43,503 44,503 44,502 45,502 45,504 46,504 46,500 47,500 47,501 48,501 48,501 49,501 49,501 50,501 50,501 51,501 51,498 52,498 52,500 53,500 53,501 54,501 54,501 55,501 55,502 56,502 56,499 57,499 57,502 58,502 58,504 59,504 59,504 60,504 60,506 61,506 61,506 62,506 62,506 63,506 63,505 64,505 64,508 65,508 65,506 66,506 66,507 67,507 67,506 68,506 68,508 69,508 69,505 70,505 70,506 71,506 71,506 72,506 72,506 73,506 73,506 74,506 74,504 75,504 75,506 76,506 76,506 77,506 77,507 78,507 78,506 79,506 79,507 80,507 80,505 81,505 81,506 82,506 82,504 83,504 83,505 84,505 84,506 85,506 85,507 86,507 86,506 87,506 87,506 88,506 88,507 89,507 89,505 90,505 90,506 91,506 91,506 92,506 92,506 93,506 93,505 94,505 94,505 95,505 95,506 96,506 96,504 97,504 97,506 98,506 98,507 99,507 99,507 100,507 100,506 101,506 101,505 102,505 102,503 103,503 103,504 104,504 104,504 105,504 105,502 106,502 106,504 107,504 107,502 108,502 108,503 109,503 109,504 110,504 110,504 111,504 111,503 112,503 112,502 113,502 113,502 114,502 114,505 115,505 115,505 116,505 116,503 117,503 117,503 118,503 118,506 119,506 119,504 120,504 120,507 121,507 121,504 122,504 122,506 123,506 123,507 124,507 124,505 125,505 125,507 126,507 126,506 127,506 127,508 128,508 128,509 129,509 129,508 130,508 130,509 131,509 131,509 132,509 132,510 133,510 133,510 134,510 134,509 135,509 135,510 136,510 136,510 137,510 137,510 138,510 138,510 139,510 139,508 140,508 140,510 141,510 141,509 142,509 142,509 143,509 143,509 144,509 144,510 145,510 145,510 146,510 146,509 147,509 147,509 148,509 148,511 149,511 149,510 150,510 150,510 151,510 151,508 152,508 152,510 153,510 153,509 154,509 154,507 155,507 155,508 156,508 156,509 157,509 157,507 158,507 158,508 159,508 159,509 160,509 160,509 161,509 161,509 162,509 162,509 163,509 163,509 164,509 164,509 165,509 165,506 166,506 166,508 167,508 167,508 168,508 168,507 169,507 169,509 170,509 170,508 171,508 171,508 172,508 172,508 173,508 173,508 174,508 174,508 175,508 175,507 176,507 176,509 177,509 177,507 178,507 178,508 179,508 179,508 180,508 180,507 181,507 181,507 182,507 182,505 183,505 183,508 184,508 184,508 185,508 185,505 186,505 186,505 187,505 187,505 188,505 188,507 189,507 189,506 190,506 190,505 191,505 191,508 192,508 192,506 193,506 193,506 194,506 194,506 195,506 195,506 196,506 196,507 197,507 197,506 198,506 198,505 199,505 199,507 200,507 200,508 201,508 201,507 202,507 202,507 203,507 203,507 204,507 204,505 205,505 205,506 206,506 206,506 207,506 207,505 208,505 208,506 209,506 209,505 210,505 210,504 211,504 211,504 212,504 212,505 213,505 213,504 214,504 214,505 215,505 215,504 216,504 216,504 217,504 217,505 218,505 218,503 219,503 219,504 220,504 220,504 221,504 221,505 222,505 222,504 223,504 223,505 224,505 224,504 225,504 225,506 226,506 226,506 227,506 227,508 228,508 228,507 229,507 229,506 230,506 230,508 231,508 231,508 232,508 232,507 233,507 233,507 234,507 234,507 235,507 235,507 236,507 236,508 237,508 237,508 238,508 238,508 239,508 239,508 240,508 240,506 241,506 241,508 242,508 242,505 243,505 243,507 244,507 244,505 245,505 245,504 246,504 246,505 247,505 247,505 248,505 248,504 249,504 249,503 250,503 250,504 251,504 251,503 252,503 252,503 253,503 253,502 254,502 254,505 255,505 255,504 256,504 256,506 257,506 257,505 258,505 258,503 259,503 259,506 260,506 260,504 261,504 261,506 262,506 262,507 263,507 263,506 264,506 264,507 265,507 265,507 266,507 266,507 267,507 267,508 268,508 268,508 269,508 269,508 270,508 270,508 271,508 271,506 272,506 272,508 273,508 273,509 274,509 274,508 275,508 275,508 276,508 276,507 277,507 277,506 278,506 278,508 279,508 279,508 280,508 280,509 281,509 281,507 282,507 282,508 283,508 283,506 284,506 284,508 285,508 285,508 286,508 286,508 287,508 287,507 288,507 288,508 289,508 289,508 290,508 290,506 291,506 291,509 292,509 292,508 293,508 293,507 294,507 294,506 295,506 295,508 296,508 296,508 297,508 297,508 298,508 298,508 299,508 299,508 300,508 300,508 301,508 301,506 302,506 302,507 303,507 303,507 304,507 304,507 305,507 305,506 306,506 306,508 307,508 307,507 308,507 308,506 309,506 309,505 310,505 310,504 311,504 311,506 312,506 312,504 313,504 313,506 314,506 314,505 315,505 315,507 316,507 316,506 317,506 317,505 318,505 318,507 319,507 319,506 320,506 320,508 321,508 321,507 322,507 322,506 323,506 323,508 324,508 324,508 325,508 325,506 326,506 326,508 327,508 327,508 328,508 328,508 329,508 329,507 330,507 330,509 331,509 331,507 332,507 332,509 333,509 333,509 334,509 334,509 335,509 335,509 336,509 336,510 337,510 337,511 338,511 338,509 339,509 339,508 340,508 340,510 341,510 341,511 342,511 342,511 343,511 343,509 344,509 344,508 345,508 345,510 346,510 346,510 347,510 347,511 348,511 348,511 349,511 349,510 350,510 350,510 351,510 351,510 352,510 352,508 353,508 353,508 354,508 354,510 355,510 355,511 356,511 356,508 357,508 357,510 358,510 358,509 359,509 359,510 360,510 360,510 361,510 361,510 362,510 362,510 363,510 363,510 364,510 364,510 365,510 365,511 366,511 366,510 367,510 367,511 368,511 368,510 369,510 369,510 370,510 370,511 371,511 371,509 372,509 372,510 373,510 373,510 374,510 374,508 375,508 375,510 376,510 376,509 377,509 377,507 378,507 378,510 379,510 379,510 380,510 380,508 381,508 381,510 382,510 382,509 383,509 383,510 384,510 384,509 385,509 385,510 386,510 386,510 387,510 387,509 388,509 388,508 389,508 389,509 390,509 390,510 391,510 391,509 392,509 392,509 393,509 393,509 394,509 394,509 395,509 395,508 396,508 396,510 397,510 397,507 398,507 398,509 399,509 399,510 400,510 400,509 401,509 401,509 402,509 402,506 403,506 403,508 404,508 404,508 405,508 405,507 406,507 406,505 407,505 407,505 408,505 408,506 409,506 409,505 410,505 410,505 411,505 411,504 412,504 412,504 413,504 413,504 414,504 414,503 415,503 415,504 416,504 416,502 417,502 417,504 418,504 418,502 419,502 419,502 420,502 420,501 421,501 421,502 422,502 422,504 423,504 423,505 424,505 424,505 425,505 425,506 426,506 426,505 427,505 427,503 428,503 428,505 429,505 429,504 430,504 430,507 431,507 431,507 432,507 432,505 433,505 433,507 434,507 434,506 435,506 435,504 436,504 436,507 437,507 437,506 438,506 438,508 439,508 439,507 440,507 440,506 441,506 441,506 442,506 442,505 443,505 443,505 444,505 444,503 445,503 445,503 446,503 446,503 447,503 447,503 448,503 448,501 449,501 449,504 450,504 450,504 451,504 451,506 452,506 452,507 453,507 453,503 454,503 454,503 455,503 455,502 456,502 456,500 457,500 457,496 458,496 458,496 459,496 459,496 460,496 460,498 461,498 461,498 462,498 462,498 463,498 463,498 464,498 464,497 465,497 465,498 466,498 466,496 467,496 467,498 468,498 468,496 469,496 469,496 470,496 470,497 471,497 471,495 472,495 472,497 473,497 473,497 474,497 474,495 475,495 475,496 476,496 476,496 477,496 477,492 478,492 478,491 479,491 479,490 480,490 480,491 481,491 481,491 482,491 482,491 483,491 483,491 484,491 484,489 485,489 485,491 486,491 486,491 487,491 487,492 488,492 488,493 489,493 489,491 490,491 490,491 491,491 491,490 492,490 492,492 493,492 493,492 494,492 494,493 495,493 495,494 496,494 496,495 497,495 497,494 498,494 498,495 499,495 499,495 500,495 500,495 501,495 501,496 502,496 502,497 503,497 503,498 504,498 504,499 505,499 505,500 506,500 506,500 507,500 507,500 508,500 508,500 509,500 509,500 510,500 510,499 511,499 511,498 512,498 512,500 513,500 513,498 514,498 514,499 515,499 515,500 516,500 516,501 517,501 517,501 518,501 518,499 519,499 519,499 520,499 520,501 521,501 521,501 522,501 522,500 523,500 523,500 524,500 524,498 525,498 525,500 526,500 526,498 527,498 527,499 528,499 528,499 529,499 529,498 530,498 530,496 531,496 531,498 532,498 532,498 533,498 533,498 534,498 534,499 535,499 535,498 536,498 536,498 537,498 537,499 538,499 538,499 539,499 539,498 540,498 540,499 541,499 541,499 542,499 542,500 543,500 543,499 544,499 544,500 545,500 545,501 546,501 546,500 547,500 547,500 548,500 548,502 549,502 549,499 550,499 550,501 551,501 551,501 552,501 552,501 553,501 553,501 554,501 554,502 555,502 555,502 556,502 556,502 557,502 557,502 558,502 558,501 559,501 559,503 560,503 560,504 561,504 561,504 562,504 562,504 563,504 563,503 564,503 564,506 565,506 565,503 566,503 566,505 567,505 567,506 568,506 568,506 569,506 569,506 570,506 570,506 571,506 571,507 572,507 572,507 573,507 573,507 574,507 574,505 575,505 575,509 576,509 576,508 577,508 577,507 578,507 578,508 579,508 579,505 580,505 580,506 581,506 581,506 582,506 582,509 583,509 583,508 584,508 584,510 585,510 585,512 586,512 586,512 587,512 587,514 588,514 588,516 589,516 589,515 590,515 590,518 591,518 591,517 592,517 592,516 593,516 593,518 594,518 594,519 595,519 595,520 596,520 596,520 597,520 597,519 598,519 598,519 599,519 599,520 600,520 600,523 601,523 601,522 602,522 602,523 603,523 603,524 604,524 604,524 605,524 605,524 606,524 606,525 607,525 607,523 608,523 608,523 609,523 609,526 610,526 610,525 611,525 611,526 612,526 612,527 613,527 613,527 613,527 613,530 614,530 614,531 615,531 615,534 616,534 616,531 617,531 617,533 618,533 618,534 619,534 619,534 620,534 620,532 621,532 621,535 622,535 622,536 623,536 623,536 624,536 624,538 625,538 625,539 626,539 626,540 627,540 627,540 628,540 628,542 629,542 629,543 630,543 630,544 631,544 631,544 632,544 632,545 633,545 633,544 634,544 634,544 635,544 635,544 636,544 636,544 637,544 637,544 638,544 638,544 638,544 638,527 639,527 639,526 640,526 640,525 641,525 641,523 642,523 642,523 643,523 643,520 644,520 644,520 645,520 645,520 646,520 646,517 647,517 647,518 648,518 648,517 649,517 649,518 650,518 650,516 651,516 651,515 652,515 652,515 653,515 653,514 654,514 654,513 655,513 655,512 656,512 656,513 657,513 657,512 658,512 658,510 659,510 659,511 660,511 660,510 661,510 661,510 662,510 662,507 663,507 663,509 664,509 664,508 665,508 665,509 666,509 666,509 667,509 667,508 668,508 668,506 669,506 669,505 670,505 670,508 671,508 671,506 672,506 672,507 673,507 673,505 674,505 674,506 675,506 675,507 676,507 676,507 677,507 677,505 678,505 678,508 679,508 679,505 680,505 680,507 681,507 681,507 682,507 682,505 683,505 683,508 684,508 684,505 685,505 685,507 686,507 686,506 687,506 687,506 688,506 688,509 689,509 689,508 690,508 690,510 691,510 691,510 692,510 692,510 693,510 693,509 694,509 694,507 695,507 695,511 696,511 696,508 697,508 697,508 698,508 698,508 699,508 699,508 700,508 700,511 701,511 701,511 702,511 702,511 703,511 703,511 704,511 704,511 705,511 705,509 706,509 706,511 707,511 707,511 708,511 708,511 709,511 709,511 710,511 710,513 711,513 711,512 712,512 712,510 713,510 713,512 714,512 714,510 715,510 715,514 716,514 716,511 717,511 717,513 718,513 718,512 719,512 719,513 720,513 720,513 721,513 721,512 722,512 722,513 723,513 723,511 724,511 724,514 725,514 725,514 726,514 726,513 727,513 727,511 728,511 728,514 729,514 729,513 730,513 730,511 731,511 731,511 732,511 732,512 733,512 733,513 734,513 734,513 735,513 735,514 736,514 736,513 737,513 737,511 738,511 738,513 739,513 739,513 740,513 740,511 741,511 741,510 742,510 742,511 743,511 743,511 744,511 744,511 745,511 745,512 746,512 746,511 747,511 747,510 748,510 748,512 749,512 749,512 750,512 750,513 751,513 751,510 752,510 752,510 753,510 753,513 754,513 754,513 755,513 755,514 756,514 756,513 757,513 757,513 758,513 758,513 759,513 759,511 760,511 760,512 761,512 761,511 762,511 762,513 763,513 763,514 764,514 764,514 765,514 765,513 766,513 766,513 767,513 767,512 768,512 768,513 769,513 769,512 770,512 770,512 771,512 771,510 772,510 772,512 773,512 773,509 774,509 774,511 775,511 775,508 776,508 776,509 777,509 777,509 778,509 778,507 779,507 779,509 780,509 780,508 781,508 781,506 782,506 782,505 783,505 783,504 784,504 784,505 785,505 785,505 786,505 786,502 787,502 787,500 788,500 788,499 789,499 789,496 790,496 790,495 791,495 791,494 792,494 792,492 793,492 793,493 794,493 794,493 795,493 795,490 796,490 796,490 797,490 797,488 798,488 798,489 799,489 799,488 800,488 800,487 801,487 801,488 802,488 802,487 803,487 803,486 804,486 804,484 805,484 805,487 806,487 806,485 807,485 807,485" transform="translate(1.5,2.5)" fill="none" stroke="#969696" stroke-width="4" filter="url(#bl)"/></g>
</svg>
</body></html>
